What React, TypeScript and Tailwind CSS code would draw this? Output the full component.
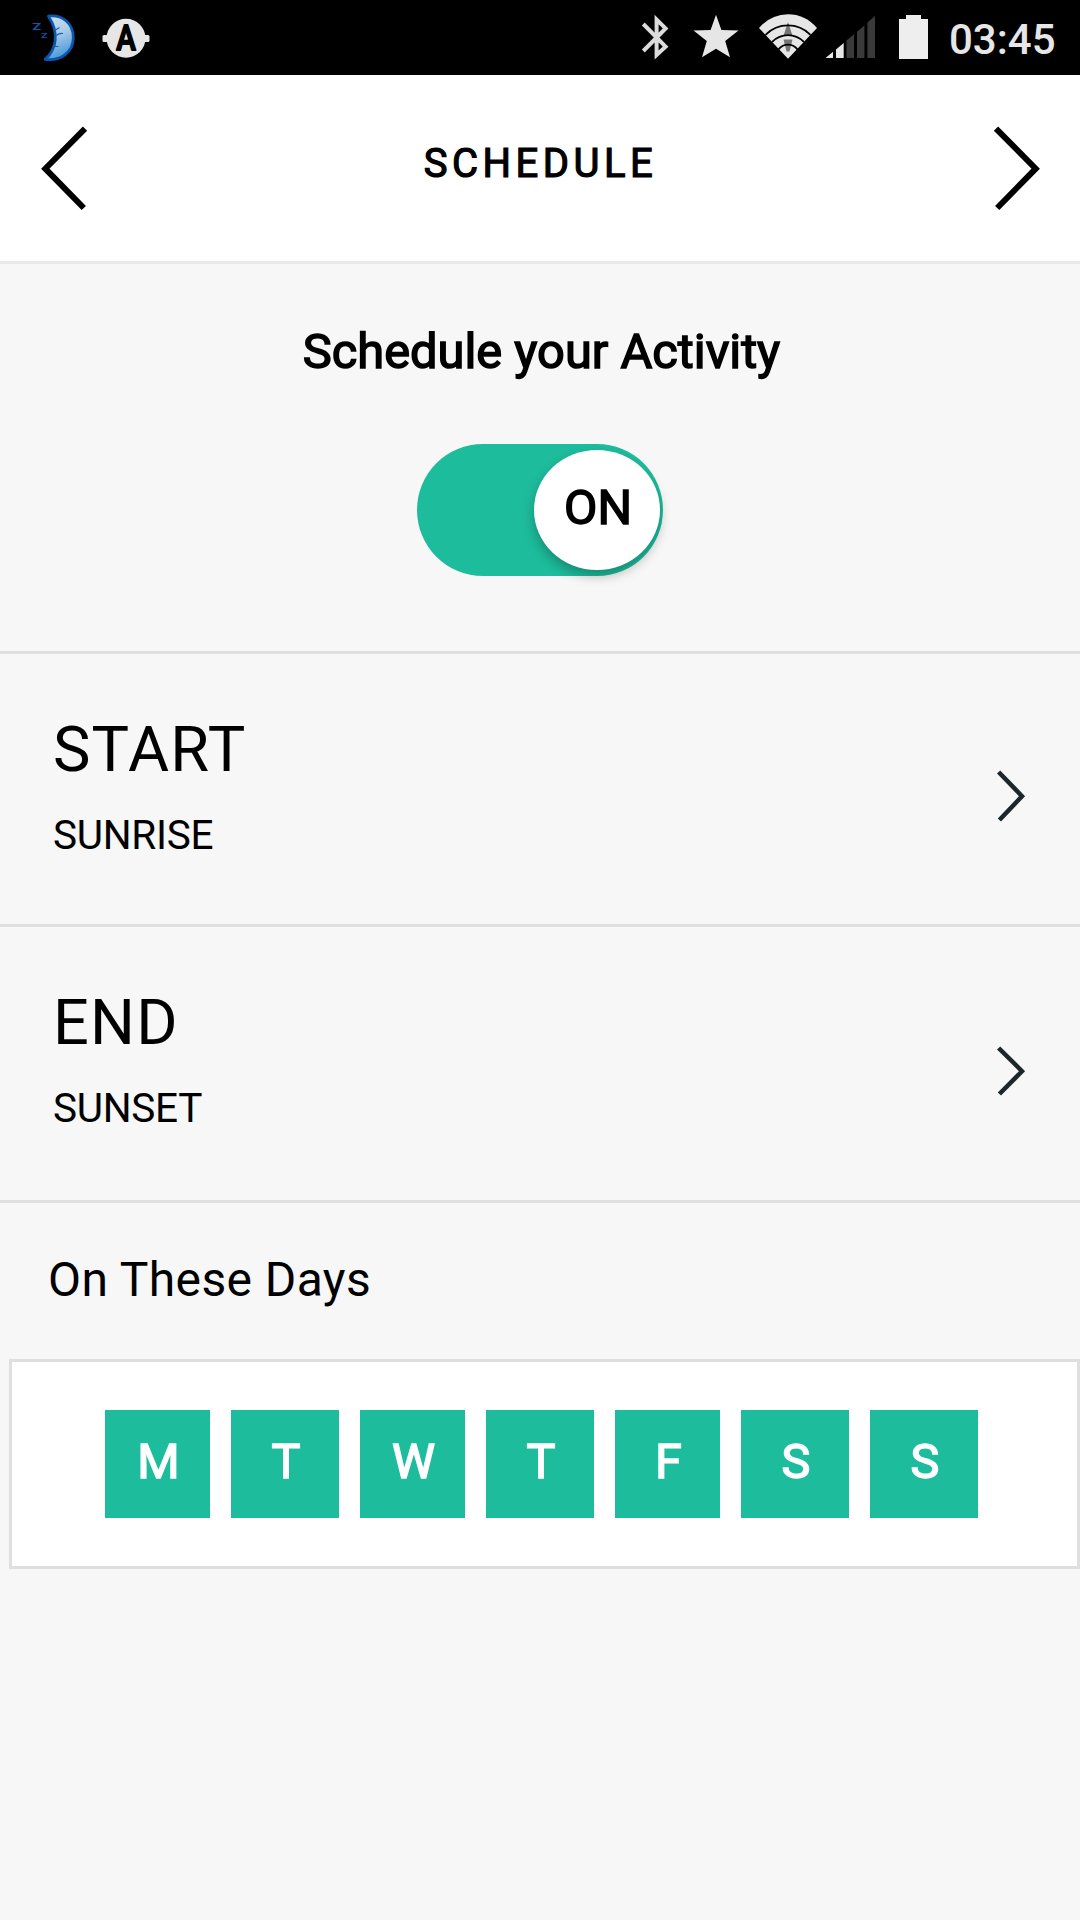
import { useState } from "react";

const days = [
    { label: "M", width: "w-[105px]" },
    { label: "T", width: "w-[108px]" },
    { label: "W", width: "w-[105px]" },
    { label: "T", width: "w-[108px]" },
    { label: "F", width: "w-[105px]" },
    { label: "S", width: "w-[108px]" },
    { label: "S", width: "w-[108px]" },
];

function MoonIcon() {
    return (
        <svg width="46" height="50" viewBox="31 12 46 50">
            <defs>
                <linearGradient id="moon" x1="0" y1="0" x2="0.3" y2="1">
                    <stop offset="0" stopColor="#d3e3f2" />
                    <stop offset="0.5" stopColor="#a9cbe8" />
                    <stop offset="1" stopColor="#4d9bdb" />
                </linearGradient>
            </defs>
            <path
                d="M48.5 15.2C62 13.5 73.3 22 73.3 36.5C73.3 51 61 60.5 45.2 58.4C56.5 48.5 59.5 32 48.5 15.2Z"
                fill="url(#moon)"
                stroke="#0c56ae"
                strokeWidth="2.8"
                strokeLinejoin="round"
            />
            <path
                d="M55.5 29L59.5 26.5M56.5 34.5Q59 32 63 32.5M54.5 45.5H58.5"
                fill="none"
                stroke="#1b62b3"
                strokeWidth="1.2"
            />
            <g fill="#0c56ae" fontFamily="Roboto, sans-serif" fontWeight="700">
                <text x="32.2" y="29" fontSize="9.5" textLength="9" lengthAdjust="spacingAndGlyphs">Z</text>
                <text x="41" y="36.8" fontSize="8" textLength="6.5" lengthAdjust="spacingAndGlyphs">Z</text>
            </g>
        </svg>
    );
}

function BadgeIcon() {
    return (
        <svg width="48" height="42" viewBox="102 16 48 42">
            <rect x="102.5" y="34" width="47" height="7" rx="1.5" fill="#e6e6e6" />
            <circle cx="126" cy="37.3" r="19.5" fill="#e6e6e6" />
            <text
                x="116.2"
                y="49"
                fontSize="35"
                fontWeight="500"
                fontFamily="Roboto, sans-serif"
                textLength="19.6"
                lengthAdjust="spacingAndGlyphs"
                stroke="#000"
                strokeWidth="1.8"
                strokeLinejoin="round"
            >
                A
            </text>
        </svg>
    );
}

function StatusIcons() {
    return (
        <svg width="290" height="75" viewBox="640 0 290 75" fill="#e6e6e6">
            {/* bluetooth */}
            <path
                d="M643.3 24L665.6 46.6L656.6 55V19.5L665.6 28.4L643.3 51"
                fill="none"
                stroke="#dcdcdc"
                strokeWidth="4"
            />
            {/* star */}
            <path d="M716 14.8L721.4 29.9L738.5 30.6L725.2 41L730 57.3L716 48.8L702 57.3L706.8 41L693.5 30.6L710.6 29.9Z" />
            {/* wifi */}
            <path d="M788 58.8L759 28Q771 14.3 788 14.3T817 28Z" />
            <path d="M788 22L792.6 36H783.4Z" fill="#757575" />
            <path d="M783.5 39.5H792.5L789.5 51.5H786.5Z" fill="#757575" />
            <path
                d="M765.5 34.8Q775 25.4 788 25.4T810.5 34.8M772 42Q779 35.2 788 35.2T804 42M778.5 49.3Q782.5 44.7 788 44.7T797.5 49.3"
                fill="none"
                stroke="#000"
                strokeWidth="1.8"
            />
            {/* signal */}
            <path d="M825.5 58L833 51.8V58ZM836 49.4L843.7 43V58H836Z" />
            <path
                d="M846.5 40.5L854 34.2V58H846.5ZM857 31.7L864.4 25.4V58H857ZM867.4 22.5L875 16V58H867.4Z"
                fill="#3a3a3a"
            />
            {/* battery */}
            <path d="M906 15H921V19H928V59H899V19H906Z" fill="#eee" />
        </svg>
    );
}

function StatusBar() {
    return (
        <div className="flex h-[75px] items-center justify-between bg-black pl-[31px] pr-[23px]">
            <div className="flex items-center gap-[25px]">
                <MoonIcon />
                <BadgeIcon />
            </div>
            <div className="flex items-center">
                <StatusIcons />
                <span className="ml-[19px] w-[108px] whitespace-nowrap pt-[4px] text-[42px] font-medium leading-[50px] text-[#e6e6e6]">
                    03:45
                </span>
            </div>
        </div>
    );
}

function Header() {
    return (
        <div className="flex h-[189px] items-start justify-between border-b-[3px] border-[#e9e9e9] bg-white pl-[40px] pr-[39px]">
            <button className="mt-[50px]">
                <svg width="48" height="86" viewBox="0 0 48 86" fill="none" stroke="#000" strokeWidth="6">
                    <path d="M45 3.7L5.3 43.7L43.8 83" />
                </svg>
            </button>
            <h1 className="mt-[59px] text-[40px] leading-[60px] tracking-[4.5px] [-webkit-text-stroke:1.2px_#000]">
                SCHEDULE
            </h1>
            <button className="mt-[50px]">
                <svg width="48" height="86" viewBox="0 0 48 86" fill="none" stroke="#000" strokeWidth="6">
                    <path d="M3 3.7L42.7 43.7L4.2 83" />
                </svg>
            </button>
        </div>
    );
}

function Toggle() {
    const [on, setOn] = useState(true);
    return (
        <button
            onClick={() => setOn(!on)}
            className={
                on
                    ? "flex h-[132px] w-[246px] items-center justify-end rounded-full bg-[#1dbc9c] px-[3px]"
                    : "flex h-[132px] w-[246px] items-center justify-start rounded-full bg-[#cccccc] px-[3px]"
            }
        >
            <span className="flex h-[120px] w-[126px] justify-center rounded-[50%] bg-white pl-[2px] pt-[28px] text-[48.5px] leading-[60px] shadow-[0_6px_12px_rgba(0,0,0,0.26)] [-webkit-text-stroke:1.5px_#000]">
                {on ? "ON" : "OFF"}
            </span>
        </button>
    );
}

function TimeRow({ title, value, className, iconHeight, iconClass }: {
    title: string;
    value: string;
    className: string;
    iconHeight: number;
    iconClass: string;
}) {
    return (
        <div className={`flex items-start justify-between border-b-[3px] border-[#dfdfdf] pl-[53px] pr-[54px] ${className}`}>
            <div className="pt-[60px]">
                <div className="text-[63px] leading-[72px] tracking-[1.2px]">{title}</div>
                <div className="mt-[25px] text-[40.5px] leading-[48px] tracking-[-0.3px]">{value}</div>
            </div>
            <svg
                width="30"
                height={iconHeight}
                viewBox="0 0 30 52"
                preserveAspectRatio="none"
                fill="none"
                stroke="#1c272c"
                strokeWidth="4.5"
                className={iconClass}
            >
                <path d="M2.6 2L26 26.2L3.4 50" />
            </svg>
        </div>
    );
}

export default function App() {
    return (
        <div className="flex h-[1920px] w-[1080px] flex-col bg-[#f7f7f7] font-[Roboto,sans-serif] text-black">
            <StatusBar />
            <Header />
            <div className="flex h-[390px] flex-col items-center border-b-[3px] border-[#dfdfdf] pt-[58px]">
                <h2 className="mb-[62px] pl-[3px] text-[48.8px] leading-[60px] [-webkit-text-stroke:1.5px_#000]">
                    Schedule your Activity
                </h2>
                <Toggle />
            </div>
            <TimeRow title="START" value="SUNRISE" className="h-[273px]" iconHeight={52} iconClass="mt-[116px]" />
            <TimeRow title="END" value="SUNSET" className="h-[276px]" iconHeight={50} iconClass="mt-[119px]" />
            <div className="h-[156px] pl-[48px] pt-[47px] text-[48px] leading-[60px] tracking-[0.4px]">
                On These Days
            </div>
            <div className="ml-[9px] flex h-[210px] gap-[21px] border-[3px] border-[#dfdfdf] bg-white pl-[93px] pt-[48px]">
                {days.map((day, i) => (
                    <div
                        key={i}
                        className={`flex h-[108px] justify-center bg-[#1dbc9c] pl-[2px] pt-[22px] text-[48.5px] leading-[60px] text-white [-webkit-text-stroke:1.5px_#fff] ${day.width}`}
                    >
                        {day.label}
                    </div>
                ))}
            </div>
        </div>
    );
}
